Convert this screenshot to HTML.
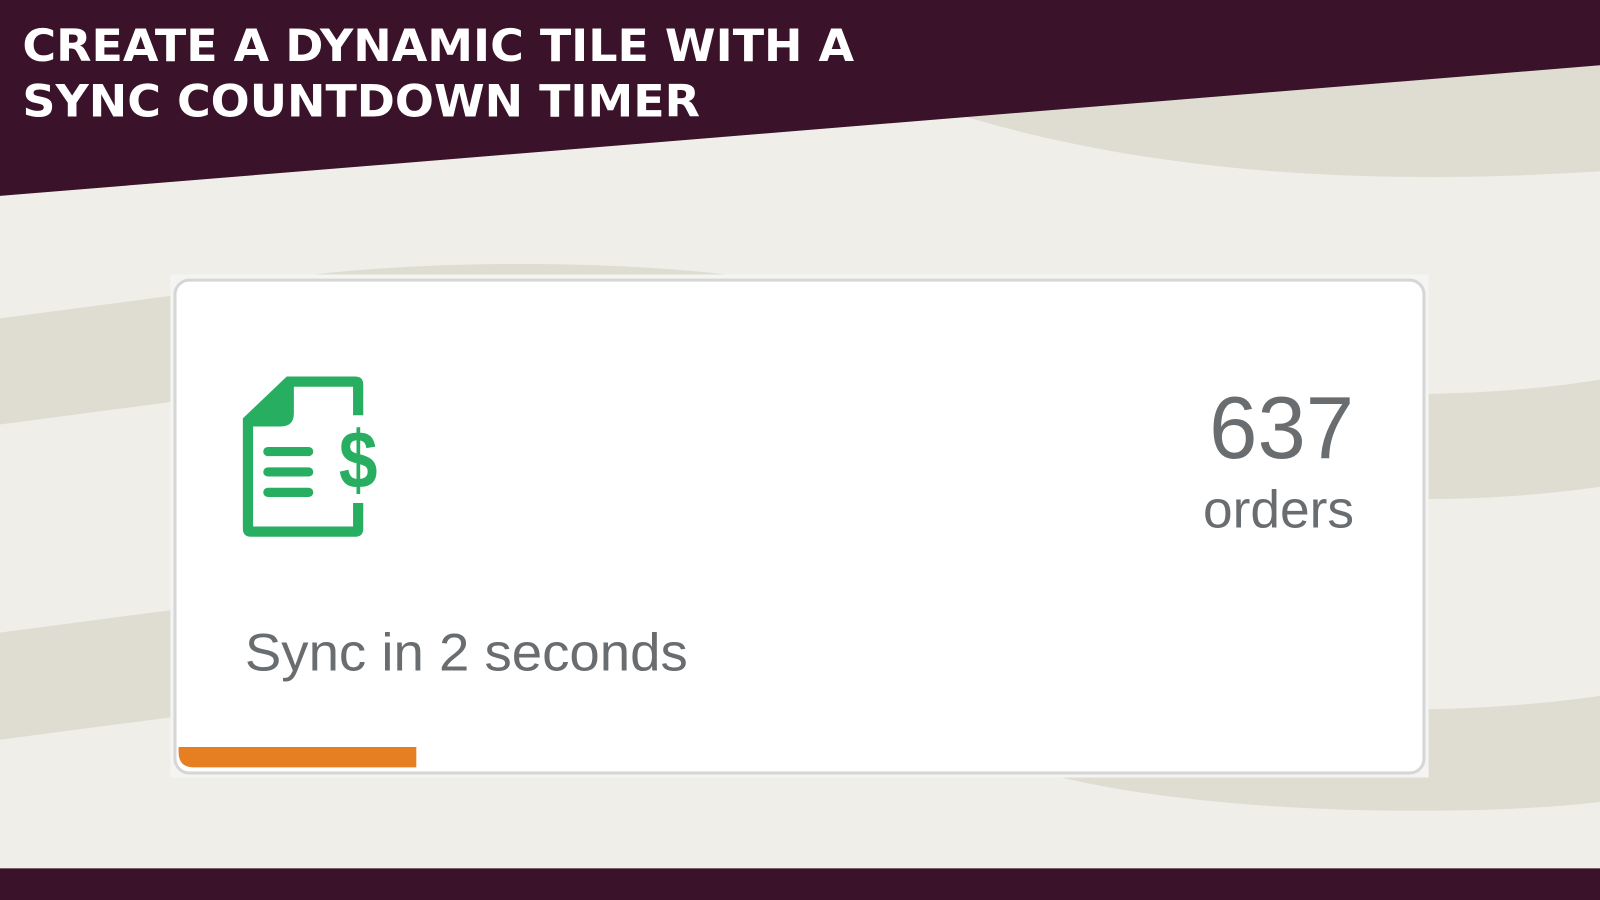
<!DOCTYPE html>
<html><head><meta charset="utf-8"><style>html,body{margin:0;padding:0;width:1600px;height:900px;overflow:hidden;background:#efeee9}</style></head>
<body>
<svg width="1600" height="900" viewBox="0 0 1568 882" preserveAspectRatio="none" xmlns="http://www.w3.org/2000/svg">
<rect width="1568" height="882" fill="#efeee9"/>
<path d="M900,100 C1050,150 1250,188 1568,168 L1568,60 Z" fill="#dfddd1"/>
<path d="M0,312 L167,290 L167,394 L0,416 Z" fill="#dfddd1"/>
<path d="M300,270 C420,255 600,255 720,270 Z" fill="#dfddd1"/>
<path d="M1400,386 C1460,385 1520,380 1568,372 L1568,477 C1520,484 1460,489 1400,489 Z" fill="#dfddd1"/>
<path d="M0,620 L167,598 L167,703 L0,725 Z" fill="#dfddd1"/>
<path d="M1400,695 C1460,694 1520,689 1568,682 L1568,786 C1450,800 1200,800 1040,762 L1400,762 Z" fill="#dfddd1"/>
<path d="M0,0 L1568,0 L1568,64 L0,192 Z" fill="#3a1229"/>
<rect x="0" y="851" width="1568" height="31" fill="#3a1229"/>
<g font-family="DejaVu Sans, sans-serif" font-weight="bold" fill="#fff" font-size="44">
<text x="22" y="60" textLength="815" lengthAdjust="spacingAndGlyphs">CREATE A DYNAMIC TILE WITH A</text>
<text x="22" y="114" textLength="664" lengthAdjust="spacingAndGlyphs">SYNC COUNTDOWN TIMER</text>
</g>
<rect x="167" y="269" width="1233" height="493" fill="#f4f4f2"/>
<rect x="171.5" y="274.5" width="1224" height="483" rx="14" fill="#fff" stroke="#d6d6d6" stroke-width="3"/>
<path d="M175,732 L408,732 L408,752 L190,752 Q175,752 175,737 Z" fill="#e67e22"/>
<g fill="#27ae60">
<path d="M238,410 L281,369 L348,369 Q356,369 356,377 L356,407 L346,407 L346,379 L288,379 L288,405 Q288,418 275,418 L248,418 L248,516 L346,516 L346,493 L356,493 L356,518 Q356,526 348,526 L246,526 Q238,526 238,518 Z"/>
<rect x="258" y="438" width="49" height="9" rx="4.5"/>
<rect x="258" y="458" width="49" height="9" rx="4.5"/>
<rect x="258" y="478" width="49" height="9" rx="4.5"/>
<text x="0" y="0" transform="translate(351,478) scale(0.85,1)" text-anchor="middle" font-family="Liberation Sans, sans-serif" font-weight="bold" font-size="80">$</text>
</g>
<g font-family="Liberation Sans, DejaVu Sans, sans-serif" fill="#6a6d70">
<text x="1327" y="449" text-anchor="end" font-size="86" textLength="142" lengthAdjust="spacingAndGlyphs">637</text>
<text x="1327" y="517" text-anchor="end" font-size="52" textLength="148" lengthAdjust="spacingAndGlyphs">orders</text>
<text x="240" y="657" font-size="52" textLength="434" lengthAdjust="spacingAndGlyphs">Sync in 2 seconds</text>
</g>
</svg>
</body></html>
